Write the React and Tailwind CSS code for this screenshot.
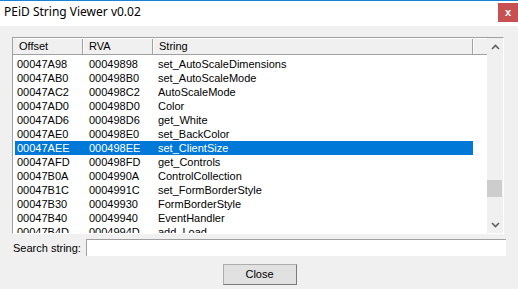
import React from 'react';

const rows = [
  ['00047A98', '00049898', 'set_AutoScaleDimensions'],
  ['00047AB0', '000498B0', 'set_AutoScaleMode'],
  ['00047AC2', '000498C2', 'AutoScaleMode'],
  ['00047AD0', '000498D0', 'Color'],
  ['00047AD6', '000498D6', 'get_White'],
  ['00047AE0', '000498E0', 'set_BackColor'],
  ['00047AEE', '000498EE', 'set_ClientSize'],
  ['00047AFD', '000498FD', 'get_Controls'],
  ['00047B0A', '0004990A', 'ControlCollection'],
  ['00047B1C', '0004991C', 'set_FormBorderStyle'],
  ['00047B30', '00049930', 'FormBorderStyle'],
  ['00047B40', '00049940', 'EventHandler'],
  ['00047B4D', '0004994D', 'add_Load'],
];

const Chevron = ({ down }) => (
  <svg width="9" height="6" viewBox="0 0 9 6" className={down ? 'rotate-180' : ''}>
    <path d="M1 5 L4.5 1.5 L8 5" fill="none" stroke="#606060" strokeWidth="1.6" />
  </svg>
);

const App = () => {
  return (
    <div
      className="w-[518px] h-[289px] bg-[#f0f0f0] overflow-hidden text-[11px] text-black"
      style={{ fontFamily: '"Liberation Sans", Arial, sans-serif' }}
    >
      <div className="h-[26px] bg-white border-t border-[#1883d7] flex items-start justify-between">
        <div className="pl-[4px] pt-[3px] text-[12px] leading-[16px]" style={{ fontFamily: '"Noto Sans", sans-serif' }}>
          PEiD String Viewer v0.02
        </div>
        <div className="mt-[2px] w-[20px] h-[19px] bg-[#c75050] text-white flex items-center justify-center text-[11px] font-bold leading-none">
          x
        </div>
      </div>

      <div className="pl-[12px] pt-[11px]">
        <div className="w-[492px] h-[197px] border border-t-[#a0a0a0] border-l-[#a0a0a0] border-r-white border-b-white flex bg-white">
          <div className="w-[474px] overflow-hidden flex flex-col">
            <div className="h-[17px] flex bg-[#f0f0f0] border-t border-white border-b border-b-[#a0a0a0] leading-[15px]">
              <div className="w-[70px] pl-[6px] border-r border-[#a0a0a0]">Offset</div>
              <div className="w-[70px] pl-[5px] border-r border-[#a0a0a0] border-l border-l-white">RVA</div>
              <div className="w-[320px] pl-[5px] border-r border-[#a0a0a0] border-l border-l-white">String</div>
              <div className="flex-1 border-l border-l-white"></div>
            </div>
            <div className="pt-[2px] pl-[2px]">
              {rows.map((r, i) => {
                const sel = i === 6;
                return (
                  <div
                    key={i}
                    className={`h-[14px] w-[458px] flex items-center leading-[14px] ${sel ? 'bg-[#0078d7] text-white' : ''}`}
                  >
                    <div className="w-[72px] pl-[2px]">{r[0]}</div>
                    <div className="w-[70px] pl-[2px]">{r[1]}</div>
                    <div className="flex-1 pl-[1px]">{r[2]}</div>
                  </div>
                );
              })}
            </div>
          </div>
          <div className="w-[16px] bg-[#f0f0f0] flex flex-col items-center">
            <div className="h-[17px] flex items-center justify-center pt-[1px]">
              <Chevron />
            </div>
            <div className="h-[125px]"></div>
            <div className="w-[15px] self-start h-[17px] bg-[#cdcdcd]"></div>
            <div className="flex-1"></div>
            <div className="h-[17px] flex items-center justify-center">
              <Chevron down />
            </div>
          </div>
        </div>
      </div>

      <div className="flex items-center pl-[13px] pt-[5px]">
        <div className="w-[73px] leading-[16px]">Search string:</div>
        <div className="w-[420px] h-[17px] bg-white border-t border-l border-[#a0a0a0]"></div>
      </div>

      <div className="flex justify-center pt-[8px] pl-[1px]">
        <div className="w-[74px] h-[21px] bg-[#e1e1e1] border border-[#adadad] border-r-[#7a7a7a] border-b-[#7a7a7a] flex items-center justify-center">
          Close
        </div>
      </div>
    </div>
  );
};

export default App;
